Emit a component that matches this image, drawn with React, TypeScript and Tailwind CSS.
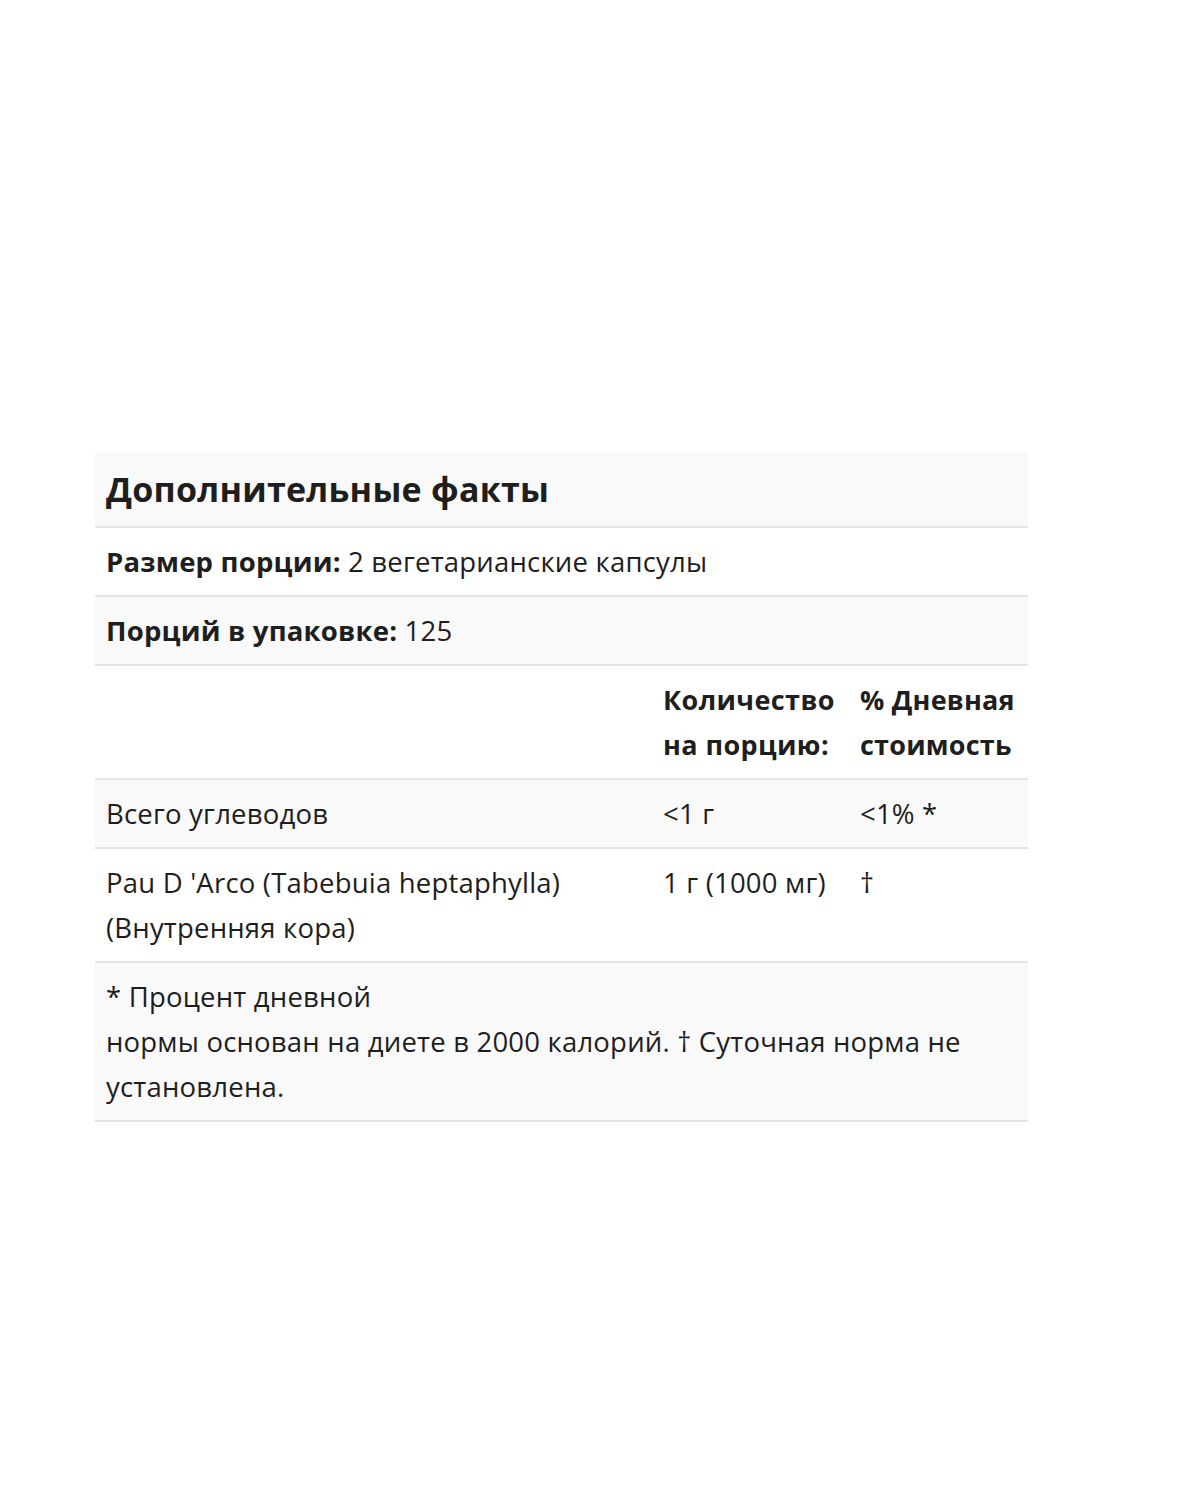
const FONT = { fontFamily: '"Open Sans", "Noto Sans", sans-serif' };

type Row = { name: string; amount: string; dv: string; striped: boolean };

const ROWS: Row[] = [
  { name: "Всего углеводов", amount: "<1 г", dv: "<1% *", striped: true },
  { name: "Pau D 'Arco (Tabebuia heptaphylla) (Внутренняя кора)", amount: "1 г (1000 мг)", dv: "†", striped: false },
];

export default function App() {
  return (
    <div className="min-h-[1500px] w-[1200px] bg-white pt-[452px] text-[#1e1e1e]" style={FONT}>
      <div className="ml-[95px] w-[933px] text-[27.5px] leading-[45px] tracking-[0.2px]">
        <div className="border-b-2 border-[#e4e4e4] bg-[#f9f9f9] px-[11px] py-[11px]">
          <h2 className="text-[34px] font-bold leading-[52px] tracking-[0.25px]">Дополнительные факты</h2>
        </div>
        <div className="border-b-2 border-[#e4e4e4] bg-white px-[11px] py-[11px]">
          <span className="font-bold">Размер порции:</span> 2 вегетарианские капсулы
        </div>
        <div className="border-b-2 border-[#e4e4e4] bg-[#f9f9f9] px-[11px] py-[11px]">
          <span className="font-bold">Порций в упаковке:</span> 125
        </div>
        <div className="grid grid-cols-[557px_197px_179px] border-b-2 border-[#e4e4e4] bg-white font-bold">
          <div className="px-[11px] py-[11px]" />
          <div className="px-[11px] py-[11px] text-[27px] tracking-[0.4px]">Количество на порцию:</div>
          <div className="px-[11px] py-[11px] text-[27px] tracking-[0.2px]">% Дневная стоимость</div>
        </div>
        {ROWS.map((r) => (
          <div
            key={r.name}
            className={`grid grid-cols-[557px_197px_179px] border-b-2 border-[#e4e4e4] ${r.striped ? "bg-[#f9f9f9]" : "bg-white"}`}
          >
            <div className="px-[11px] py-[11px] pr-[60px]">{r.name}</div>
            <div className="px-[11px] py-[11px]">{r.amount}</div>
            <div className="px-[11px] py-[11px]">{r.dv}</div>
          </div>
        ))}
        <div className="border-b-2 border-[#e4e4e4] bg-[#f9f9f9] px-[11px] py-[11px] pr-[50px]">
          * Процент дневной
          <br />
          нормы основан на диете в 2000 калорий. † Суточная норма не установлена.
        </div>
      </div>
    </div>
  );
}
